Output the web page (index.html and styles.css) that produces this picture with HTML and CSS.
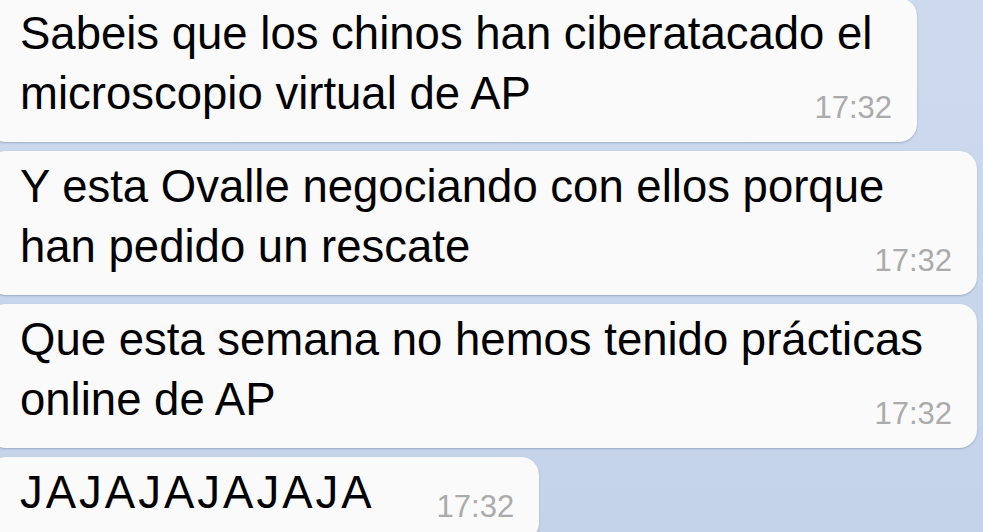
FILE: index.html
```html
<!DOCTYPE html>
<html lang="es">
<head>
  <meta charset="UTF-8" />
  <meta name="viewport" content="width=device-width, initial-scale=1.0"/>
  <title>Chat</title>
  <link rel="stylesheet" href="styles.css">
</head>
<body>
  <div class="chat">
    <div class="bubble bubble-first">
      <p class="msg">Sabeis que los chinos han ciberatacado el<br>microscopio virtual de AP<span class="time">17:32</span></p>
    </div>

    <div class="bubble bubble-full">
      <p class="msg">Y esta Ovalle negociando con ellos porque<br>han pedido un rescate<span class="time">17:32</span></p>
    </div>

    <div class="bubble bubble-full">
      <p class="msg">Que esta semana no hemos tenido prácticas<br>online de AP<span class="time">17:32</span></p>
    </div>

    <div class="bubble">
      <p class="msg"><span class="laugh">JAJAJAJAJAJA</span><span class="time">17:32</span></p>
    </div>
  </div>
</body>
</html>
```

FILE: styles.css
```css
* {
  box-sizing: border-box;
  margin: 0;
  padding: 0;
}

body {
  height: 532px;
  overflow: hidden;
  font-family: 'Liberation Sans', Arial, sans-serif;
  background: linear-gradient(180deg, #cddaee, #c4d3ea);
  color: #000;
}

.chat {
  width: 989px;
  margin: -2px 0 0 -12px;
  display: flex;
  flex-direction: column;
  align-items: flex-start;
  gap: 9px;
}

.bubble {
  background: #fafafa;
  border-radius: 18px;
  box-shadow: 0 1px 2px rgba(50, 70, 110, 0.3);
  padding: 6px 25px 18px 32px;
}

.bubble-first {
  width: 929px;
}

.bubble-full {
  align-self: stretch;
}

.msg {
  font-size: 45.5px;
  line-height: 60px;
}

.laugh {
  letter-spacing: 3px;
}

.time {
  float: right;
  margin-left: 62px;
  padding-top: 30px;
  font-size: 31px;
  line-height: 28px;
  color: #ababab;
}
```
